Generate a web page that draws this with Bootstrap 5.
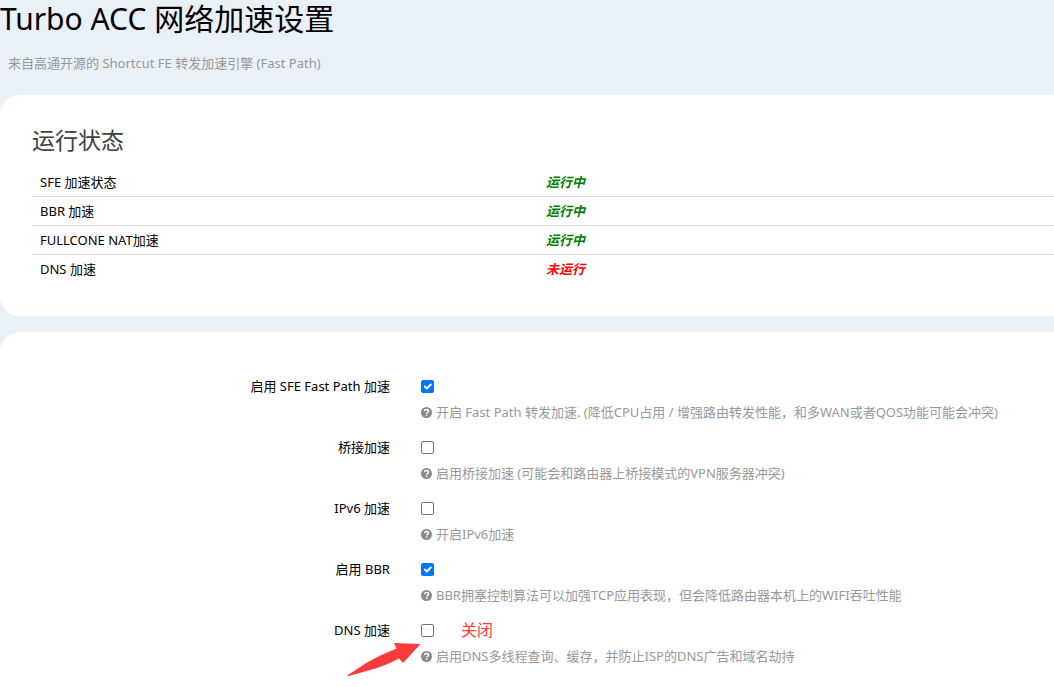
<!DOCTYPE html>
<html lang="zh-CN">
<head>
<meta charset="utf-8">
<meta name="viewport" content="width=device-width, initial-scale=1">
<title>Turbo ACC 网络加速设置</title>
<link href="https://cdn.jsdelivr.net/npm/bootstrap@5.3.0/dist/css/bootstrap.min.css" rel="stylesheet">
<style>
  body { background: #eaf0f7; color: #000; font-family: "Noto Sans", "Noto Sans CJK SC", sans-serif; font-size: 13px; line-height: 20px; }
  h1 { font-size: 30px; line-height: 38px; color: #000; }
  .page-intro { color: #999; padding: 15px 8px 0; margin-bottom: 22px; }
  .panel { background: #fff; border-radius: 20px 0 0 20px; }
  .panel-status { padding: 28px 0 33px 32px; margin-bottom: 16px; }
  .panel-form { border-radius: 20px 0 0 0; padding-top: 44px; }
  h2 { font-size: 23px; line-height: 34px; color: #404040; margin-bottom: 11px; }
  .status-table { --bs-table-color: #000; --bs-table-bg: transparent; border-color: #ddd; }
  .status-table th { width: 49.5%; }
  .status-table th, .status-table td { padding: 4px 8px; line-height: 20px; }
  .status-table tr:last-child > * { border-bottom: 0; }
  .is-on { color: #008000; }
  .is-off { color: #f00; }
  .option { min-height: 61px; }
  .option-label { width: 37%; }
  .option-field { padding-left: 31px; }
  .option .form-check-input { width: 13px; height: 13px; margin: 0; border: 1px solid #767676; border-radius: 2px; }
  .option .form-check-input:checked { background-color: #0075ff; border-color: #0075ff; background-size: 13px; }
  .check-line { height: 20px; }
  .hint { color: #999; margin-top: 6px; gap: 4px; }
  .hint svg { width: 11px; height: 11px; color: #8a8a8a; }
  .callout-note { color: #fd3b3b; font-size: 16px; margin-left: 27px; }
  .callout-arrow { left: -74px; top: 22px; width: 74px; height: 35px; }
</style>
</head>
<body class="d-flex flex-column min-vh-100">
<svg class="d-none" aria-hidden="true">
  <symbol id="help" viewBox="0 0 16 16">
    <circle cx="8" cy="8" r="8" fill="currentColor"/>
    <path d="M5 6.1C5.3 4.4 6.5 3.7 8 3.7c1.7 0 3 .9 3 2.4C11 7.9 8.4 7.8 8.2 9.5" fill="none" stroke="#fff" stroke-width="2.1"/>
    <rect x="7" y="10.7" width="2.3" height="2.1" fill="#fff"/>
  </symbol>
</svg>
<header>
  <h1 class="fw-normal mb-0">Turbo ACC 网络加速设置</h1>
  <p class="page-intro">来自高通开源的 Shortcut FE 转发加速引擎 (Fast Path)</p>
</header>
<main class="d-flex flex-column flex-grow-1">
  <section class="panel panel-status">
    <h2 class="fw-normal">运行状态</h2>
    <table class="table status-table mb-0">
      <tbody>
        <tr><th scope="row" class="fw-normal">SFE 加速状态</th><td><em class="fw-bold is-on">运行中</em></td></tr>
        <tr><th scope="row" class="fw-normal">BBR 加速</th><td><em class="fw-bold is-on">运行中</em></td></tr>
        <tr><th scope="row" class="fw-normal">FULLCONE NAT加速</th><td><em class="fw-bold is-on">运行中</em></td></tr>
        <tr><th scope="row" class="fw-normal">DNS 加速</th><td><em class="fw-bold is-off">未运行</em></td></tr>
      </tbody>
    </table>
  </section>
  <form class="panel panel-form flex-grow-1">
    <div class="option d-flex">
      <label class="option-label text-end" for="sfe">启用 SFE Fast Path 加速</label>
      <div class="option-field flex-grow-1">
        <div class="check-line d-flex align-items-center"><input class="form-check-input" type="checkbox" id="sfe" checked></div>
        <div class="hint d-flex align-items-center"><svg aria-hidden="true"><use href="#help"/></svg><span>开启 Fast Path 转发加速. (降低CPU占用 / 增强路由转发性能，和多WAN或者QOS功能可能会冲突)</span></div>
      </div>
    </div>
    <div class="option d-flex">
      <label class="option-label text-end" for="bridge">桥接加速</label>
      <div class="option-field flex-grow-1">
        <div class="check-line d-flex align-items-center"><input class="form-check-input" type="checkbox" id="bridge"></div>
        <div class="hint d-flex align-items-center"><svg aria-hidden="true"><use href="#help"/></svg><span>启用桥接加速 (可能会和路由器上桥接模式的VPN服务器冲突)</span></div>
      </div>
    </div>
    <div class="option d-flex">
      <label class="option-label text-end" for="ipv6">IPv6 加速</label>
      <div class="option-field flex-grow-1">
        <div class="check-line d-flex align-items-center"><input class="form-check-input" type="checkbox" id="ipv6"></div>
        <div class="hint d-flex align-items-center"><svg aria-hidden="true"><use href="#help"/></svg><span>开启IPv6加速</span></div>
      </div>
    </div>
    <div class="option d-flex">
      <label class="option-label text-end" for="bbr">启用 BBR</label>
      <div class="option-field flex-grow-1">
        <div class="check-line d-flex align-items-center"><input class="form-check-input" type="checkbox" id="bbr" checked></div>
        <div class="hint d-flex align-items-center"><svg aria-hidden="true"><use href="#help"/></svg><span>BBR拥塞控制算法可以加强TCP应用表现，但会降低路由器本机上的WIFI吞吐性能</span></div>
      </div>
    </div>
    <div class="option d-flex">
      <label class="option-label text-end" for="dns">DNS 加速</label>
      <div class="option-field flex-grow-1">
        <div class="check-line d-flex align-items-center position-relative">
          <input class="form-check-input" type="checkbox" id="dns">
          <span class="callout-note">关闭</span>
          <svg class="callout-arrow position-absolute" viewBox="0 0 74 35" aria-hidden="true"><path d="M1 33L20 20.5Q34 12.5 49.5 6.5L47 1L73.5 2L56 21L52 16.5Q42 22 30 26L2 34Q0 34.5 1 33Z" fill="#fd3b3b"/></svg>
        </div>
        <div class="hint d-flex align-items-center"><svg aria-hidden="true"><use href="#help"/></svg><span>启用DNS多线程查询、缓存，并防止ISP的DNS广告和域名劫持</span></div>
      </div>
    </div>
  </form>
</main>
<script src="https://cdn.jsdelivr.net/npm/bootstrap@5.3.0/dist/js/bootstrap.bundle.min.js"></script>
</body>
</html>
